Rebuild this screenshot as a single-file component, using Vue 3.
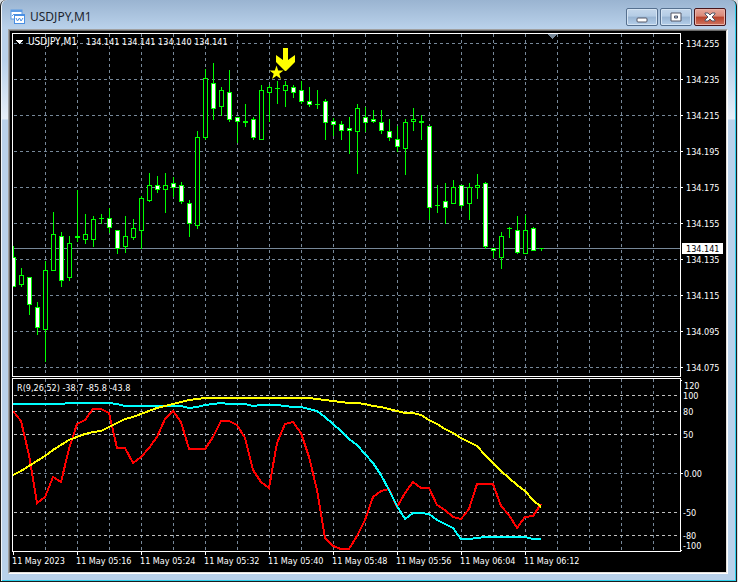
<script setup>
import { ref } from 'vue'

const symbol = ref('USDJPY,M1')
const quotes = '134.141 134.141 134.140 134.141'

const BAR = 8
const barX = (i) => 13 + i * BAR

// Each bar: high, body top, body bottom, low, kind (u = hollow, d = filled, x = flat)
const bars = [
  [246, 257, 287, 287, 'd'], [268, 275, 285, 287, 'u'], [277, 277, 305, 315, 'd'], [302, 307, 328, 335, 'd'],
  [261, 270, 330, 362, 'u'], [212, 234, 271, 271, 'u'], [232, 236, 281, 287, 'd'], [236, 243, 278, 281, 'u'],
  [190, 236, 238, 242, 'x'], [214, 234, 240, 244, 'u'], [216, 219, 240, 247, 'u'], [214, 218, 219, 224, 'x'],
  [208, 218, 228, 233, 'd'], [230, 230, 249, 254, 'd'], [216, 236, 247, 253, 'u'], [219, 228, 238, 240, 'u'],
  [196, 198, 231, 249, 'u'], [173, 185, 201, 202, 'u'], [176, 185, 190, 193, 'd'], [173, 185, 190, 213, 'u'],
  [177, 183, 188, 197, 'd'], [182, 185, 202, 204, 'd'], [200, 203, 224, 237, 'd'], [131, 137, 226, 229, 'u'],
  [69, 78, 138, 140, 'u'], [63, 83, 109, 120, 'd'], [87, 90, 107, 116, 'u'], [70, 92, 120, 122, 'd'],
  [117, 117, 122, 143, 'd'], [104, 121, 123, 127, 'x'], [117, 119, 138, 140, 'd'], [85, 90, 140, 140, 'u'],
  [85, 87, 93, 122, 'u'], [81, 88, 89, 104, 'x'], [81, 85, 91, 107, 'u'], [85, 87, 93, 98, 'd'],
  [81, 90, 102, 104, 'd'], [87, 101, 105, 107, 'd'], [90, 104, 105, 109, 'x'], [99, 101, 123, 140, 'd'],
  [118, 121, 125, 136, 'd'], [121, 124, 131, 140, 'd'], [117, 128, 131, 154, 'd'], [104, 108, 132, 174, 'u'],
  [107, 117, 123, 132, 'd'], [110, 119, 122, 123, 'd'], [110, 122, 131, 134, 'd'], [119, 131, 138, 141, 'd'],
  [126, 139, 147, 152, 'd'], [119, 122, 149, 175, 'u'], [108, 119, 122, 131, 'u'], [115, 121, 123, 140, 'x'],
  [126, 126, 208, 220, 'd'], [185, 205, 206, 213, 'x'], [183, 201, 208, 224, 'd'], [180, 187, 204, 204, 'u'],
  [185, 185, 206, 208, 'd'], [183, 187, 204, 220, 'u'], [174, 185, 188, 199, 'u'], [182, 183, 247, 249, 'd'],
  [248, 248, 251, 258, 'd'], [232, 236, 258, 269, 'u'], [227, 228, 229, 238, 'x'], [216, 230, 253, 254, 'd'],
  [215, 230, 254, 254, 'u'], [227, 228, 251, 251, 'd'], [248, 248, 249, 251, 'x'],
]

const fast = [411, 421, 455, 503, 497, 477, 482, 449, 424, 420, 409, 409, 413, 448, 448, 463, 457, 448, 437, 419,
  411, 422, 449, 449, 449, 437, 421, 421, 425, 438, 470, 482, 488, 443, 424, 422, 433, 457, 490, 538,
  546, 549, 549, 536, 520, 497, 491, 489, 507, 493, 482, 488, 488, 505, 510, 517, 519, 509, 484, 484,
  484, 506, 515, 528, 517, 516, 504]
const middle = [404, 404, 404, 404, 404, 404, 404, 403, 403, 403, 403, 403, 403, 404, 406, 406, 406, 406, 406, 406,
  406, 406, 408, 407, 405, 404, 403, 404, 404, 404, 406, 405, 405, 405, 406, 407, 407, 409, 411, 417,
  424, 431, 439, 445, 454, 463, 475, 490, 506, 519, 513, 513, 514, 520, 524, 528, 539, 539, 538, 537,
  537, 537, 537, 537, 537, 539, 539]
const slow = [475, 471, 466, 461, 456, 450, 445, 440, 437, 434, 432, 431, 427, 423, 419, 417, 414, 411, 408, 406,
  404, 402, 400, 399, 398, 398, 398, 398, 398, 398, 398, 398, 398, 398, 398, 398, 398, 398, 399, 400,
  401, 402, 403, 403, 404, 406, 407, 409, 411, 413, 413, 415, 420, 424, 429, 433, 438, 442, 446, 455,
  463, 471, 478, 485, 491, 500, 507]
const toPoints = (rows) => rows.map((y, i) => `${barX(i)},${y}`).join(' ')
const lines = [
  { name: 'fast', points: toPoints(fast) },
  { name: 'middle', points: toPoints(middle) },
  { name: 'slow', points: toPoints(slow) },
]

const columns = Array.from({ length: 20 }, (_, i) => 32 + i * 32)
const prices = Array.from({ length: 10 }, (_, i) => ({
  y: 10 + i * 36,
  label: (134.255 - i * 0.02).toFixed(3),
}))
const levels = [
  { y: 395, label: '100', x: 2, base: 399 },
  { y: 411, label: '80', x: 2, base: 415 },
  { y: 434, label: '50', x: 2, base: 438 },
  { y: 473, label: '0.00', x: 3, base: 477, zero: true },
  { y: 512, label: '-50', x: 2, base: 516 },
  { y: 535, label: '-80', x: 2, base: 539 },
]
const times = ['2023', '05:16', '05:24', '05:32', '05:40', '05:48', '05:56', '06:04', '06:12']
</script>

<template>
  <div class="desktop">
    <section class="window" aria-label="Chart window">
      <header class="titlebar">
        <svg class="app-icon" width="16" height="16" viewBox="0 0 16 16" aria-hidden="true">
          <rect x="1" y="1" width="11" height="9" fill="#fff" stroke="#5b9be6" />
          <rect x="1" y="1" width="11" height="2" fill="#5b9be6" />
          <path d="M2 7l2-2 1 2 2-2" fill="none" stroke="#5b9be6" />
          <rect x="4.500" y="5.500" width="10" height="9" fill="#fff" stroke="#4a8fe2" />
          <rect x="4" y="5" width="11" height="2" fill="#4a8fe2" />
          <path d="M6 9l1.500 3 2-3 1.500 3 2-3" fill="none" stroke="#4a8fe2" />
        </svg>
        <h1>{{ symbol }}</h1>
        <div class="controls">
          <button type="button" aria-label="Minimize">
            <svg width="12" height="12" viewBox="0 0 12 12"><rect x="1" y="7" width="10" height="4" rx="1" fill="#fff" stroke="#535666" /></svg>
          </button>
          <button type="button" aria-label="Maximize">
            <svg width="12" height="12" viewBox="0 0 12 12">
              <path d="M1 2h10v8H1z" fill="#fff" stroke="#535666" />
              <path d="M4.500 5h3v2h-3z" fill="#a9c4e2" stroke="#535666" />
            </svg>
          </button>
          <button type="button" class="close" aria-label="Close">
            <svg width="12" height="12" viewBox="0 0 12 12">
              <path d="M1 2h3l2 2 2-2h3v1L8 6l3 3v1H8L6 8l-2 2H1V9l3-3-3-3z" fill="#fff" stroke="#535666" />
            </svg>
          </button>
        </div>
      </header>

      <div class="client">
        <div class="canvas">
          <div class="pane price-pane">
            <svg class="plot" role="img" aria-label="Price chart">
              <g class="grid">
                <line v-for="x in columns" :key="x" :x1="x + 0.5" :x2="x + 0.5" y1="0" y2="100%" />
                <line v-for="p in prices" :key="p.y" x1="1" x2="100%" :y1="p.y - 0.5" :y2="p.y - 0.5" />
              </g>
              <line class="bid" x1="0" x2="100%" y1="214.5" y2="214.5" />
              <g transform="translate(-13 -34)">
                <g v-for="(b, i) in bars" :key="i" class="bar">
                  <rect :x="barX(i)" :y="b[0]" width="1" :height="Math.max(b[3] - b[0], 1)" />
                  <rect :x="barX(i) - 2" :y="b[1]" width="5" :height="b[2] - b[1]" />
                  <rect
                    v-if="b[4] !== 'x'" :class="b[4] === 'u' ? 'hollow' : 'filled'"
                    :x="barX(i) - 1" :y="b[1] + 1" width="3" :height="b[2] - b[1] - 2"
                  />
                </g>
                <path class="shift" d="M547 34h10l-5 5z" />
                <path class="signal" d="M283 48h5v12l7-5v7l-9 9h-1l-9-9v-7l7 5z" />
                <path class="signal" d="M276.500 65.500l1.700 5h5.300l-4.200 3.200 1.600 5.300-4.400-3.200-4.400 3.200 1.600-5.300-4.200-3.200h5.300z" />
                <path class="white" d="M16 40h7l-3 4h-1z" />
                <text class="symbol" x="28" y="45">{{ symbol }}</text>
                <text x="86" y="45">{{ quotes }}</text>
              </g>
            </svg>
            <svg class="axis">
              <g transform="translate(0 -33)">
                <g v-for="p in prices" :key="p.label">
                  <rect class="white" x="0" :y="p.y + 33" width="2" height="1" />
                  <text x="5" :y="p.y + 37">{{ p.label }}</text>
                </g>
                <rect class="white" x="1" y="243" width="41" height="11" />
                <text class="current" x="5" y="252">134.141</text>
              </g>
            </svg>
          </div>

          <div class="pane indicator-pane">
            <svg class="plot" role="img" aria-label="R indicator">
              <g class="grid">
                <line v-for="x in columns" :key="x" :x1="x + 0.5" :x2="x + 0.5" y1="0" y2="100%" />
                <line
                  v-for="l in levels" :key="l.y" :class="{ level: !l.zero }"
                  x1="1" x2="100%" :y1="l.y - 378.5" :y2="l.y - 378.5"
                />
              </g>
              <g transform="translate(-13 -379)">
                <polyline v-for="l in lines" :key="l.name" :class="l.name" :points="l.points" />
                <text x="17" y="391">R(9,26,52) -38.7 -85.8 -43.8</text>
              </g>
            </svg>
            <svg class="axis">
              <g transform="translate(0 -378)">
                <rect class="white" x="0" y="380" width="1" height="1" />
                <rect class="white" x="0" y="473" width="2" height="1" />
                <rect class="white" x="0" y="550" width="1" height="1" />
                <text x="3" y="389">120</text>
                <text v-for="l in levels" :key="l.label" :x="l.x" :y="l.base">{{ l.label }}</text>
                <text x="2" y="549">-100</text>
              </g>
            </svg>
          </div>

          <ol class="times">
            <li v-for="t in times" :key="t">11 May {{ t }}</li>
          </ol>
        </div>
      </div>
    </section>
  </div>
</template>

<style>
body {
  margin: 0;
  background: #fff;
}
</style>

<style scoped>
.desktop {
  padding-right: 1px;
  background: #d8dde3;
}

.window {
  box-sizing: border-box;
  display: flex;
  flex-direction: column;
  min-height: 100vh;
  padding: 0 8px 7px 7px;
  border: solid #1c1c1c;
  border-width: 0 1px 1px;
  border-radius: 6px 6px 0 0;
  background:
    linear-gradient(#9ab4d1 0, #b9d1ea 28px, #b9d1ea 60px, #e6eef7 119px, #b9d1ea 120px);
  box-shadow: inset 1px 0 #f2f6fa, inset -1px -1px #2fd0ec;
}

.titlebar {
  display: flex;
  align-items: center;
  height: 29px;
  padding: 0 2px;
}

.app-icon {
  margin-top: 5px;
}

h1 {
  flex: 1;
  margin: 5px 0 0 4px;
  font: 12px/16px "Noto Sans", "Open Sans", sans-serif;
  color: #1d2530;
}

.controls {
  display: flex;
  gap: 2px;
  margin-top: 5px;
}

button {
  display: flex;
  align-items: center;
  justify-content: center;
  width: 32px;
  height: 18px;
  padding: 0;
  border: 1px solid #56708f;
  border-radius: 2px;
  background: linear-gradient(#c4d7eb 0, #b4cce5 45%, #98b4d2 50%, #b5cfea 100%);
  box-shadow: inset 0 0 0 1px #d5e4f3;
}

button.close {
  border-color: #48161c;
  background: linear-gradient(#e6a79b 0, #d98878 45%, #b8412a 50%, #cf7560 100%);
  box-shadow: inset 0 0 0 1px #e9b3a8;
}

.client {
  display: flex;
  flex: 1;
  border: 1px solid;
  border-color: #a0a0a0 #fff #fff #a0a0a0;
}

.canvas {
  display: flex;
  flex: 1;
  flex-direction: column;
  min-width: 0;
  padding: 2px 0 0 2px;
  border: 1px solid;
  border-color: #696969 #e3e0dc #e3e0dc #696969;
  background: #000;
}

.pane {
  display: flex;
}

.price-pane {
  flex: 1;
  min-height: 344px;
  margin-bottom: 1px;
}

.indicator-pane {
  height: 174px;
}

.plot {
  box-sizing: border-box;
  flex: 1;
  width: 0;
  height: auto;
  border: 1px solid #fff;
  shape-rendering: crispEdges;
}

.axis {
  flex: none;
  width: 45px;
  height: auto;
}

text,
.times {
  font-family: "DejaVu Sans Condensed", "Noto Sans", sans-serif;
  font-size: 9px;
  fill: #fff;
  color: #fff;
}

text.symbol {
  font-size: 10px;
}

.grid line {
  stroke: #778899;
  stroke-dasharray: 3 3;
}

.grid .level {
  stroke: #c0c0c0;
}

.bid {
  stroke: #778899;
}

.bar rect {
  fill: #00ff00;
}

.bar .hollow {
  fill: #000;
}

.bar .filled,
.white {
  fill: #fff;
}

.shift {
  fill: #778899;
}

.signal {
  fill: #ffff00;
  shape-rendering: auto;
}

.current {
  fill: #000;
}

polyline {
  fill: none;
  stroke-width: 2;
}

.fast {
  stroke: #ff0000;
}

.middle {
  stroke: #00ffff;
}

.slow {
  stroke: #ffff00;
}

.times {
  display: flex;
  height: 20px;
  margin: 0;
  padding: 0;
  overflow: hidden;
  line-height: 12px;
  list-style: none;
  white-space: nowrap;
}

.times li {
  flex: 0 0 64px;
}

.times li::before {
  content: "";
  display: block;
  width: 1px;
  height: 3px;
  margin-left: 1px;
  background: #fff;
}
</style>
